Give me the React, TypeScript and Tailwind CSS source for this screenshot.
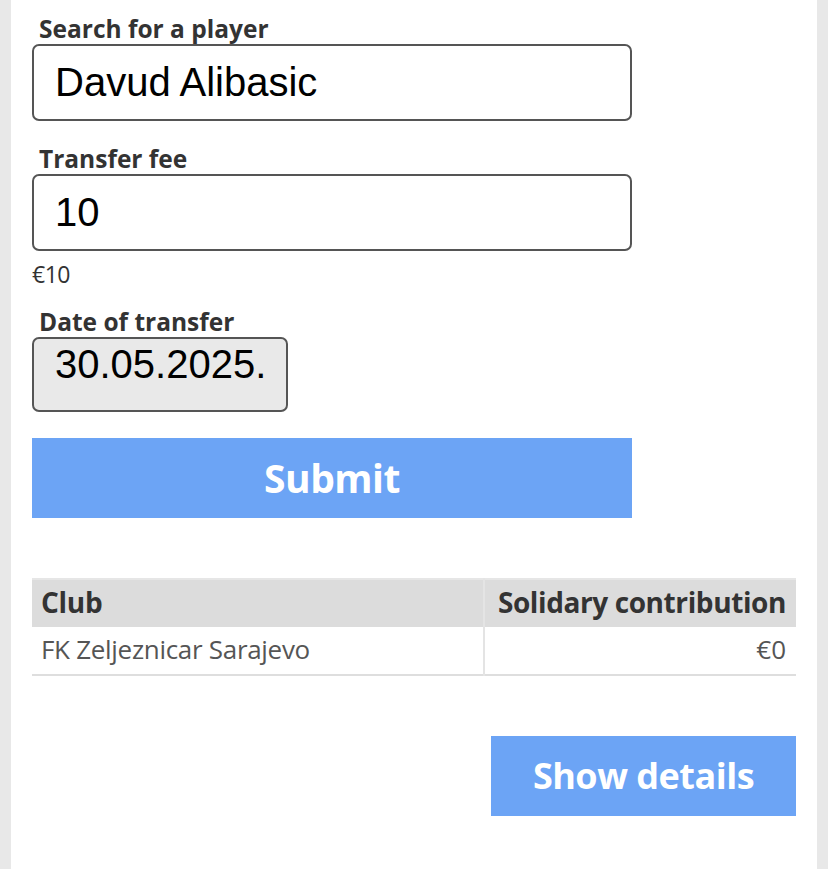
import React, { useState } from 'react'

const labelCls = "block text-[24.5px] leading-[30px] font-bold text-[#333] pl-[7px]"
const inputCls = "w-[600px] h-[77px] border-2 border-[#555] rounded-[7px] px-[21px] text-[40px] text-black bg-white outline-none"

export default function App() {
    const [player, setPlayer] = useState('Davud Alibasic')
    const [fee, setFee] = useState('10')

    return (
        <div className="min-h-[869px] bg-[#e8e8e8] px-[11px] font-['Open_Sans',sans-serif]">
            <div className="bg-white min-h-[869px] pt-[14px] px-[21px]">
                <label className={labelCls}>Search for a player</label>
                <input
                    value={player}
                    onChange={(e) => setPlayer(e.target.value)}
                    className={inputCls}
                    style={{ fontFamily: "'Liberation Sans', Arial, sans-serif" }}
                />

                <label className={`${labelCls} mt-[23px]`}>Transfer fee</label>
                <input
                    value={fee}
                    onChange={(e) => setFee(e.target.value)}
                    className={inputCls}
                    style={{ fontFamily: "'Liberation Sans', Arial, sans-serif" }}
                />
                <div className="text-[23px] leading-[26px] text-[#333] mt-[10px] tracking-[-0.5px]">€{fee}</div>

                <label className={`${labelCls} mt-[20px]`}>Date of transfer</label>
                <div className="w-[256px] h-[75px] border-2 border-[#555] rounded-[7px] bg-[#e9e9e9] px-[21px] pt-[2px] text-[40px] leading-[46px] text-black font-['Liberation_Sans',Arial,sans-serif]">
                    30.05.2025.
                </div>

                <button className="mt-[26px] w-[600px] h-[80px] bg-[#6ca4f5] text-white text-[39px] font-bold tracking-[-0.5px]">
                    Submit
                </button>

                <table className="mt-[60px] w-[764px] border-collapse">
                    <thead>
                        <tr className="bg-[#dcdcdc] border-t-2 border-[#e6e6e6]">
                            <th className="text-left text-[28px] font-bold text-[#333] px-[9px] pb-[4px] h-[48px] tracking-[-0.3px]">Club</th>
                            <th className="text-right text-[28px] font-bold text-[#333] px-[10px] pb-[4px] w-[312px] border-l-2 border-[#e4e4e4] tracking-[-0.4px]">Solidary contribution</th>
                        </tr>
                    </thead>
                    <tbody>
                        <tr className="border-b-2 border-[#dedede]">
                            <td className="text-left text-[26px] text-[#555] px-[9px] pb-[2px] h-[48px] tracking-[-0.3px]">FK Zeljeznicar Sarajevo</td>
                            <td className="text-right text-[26px] text-[#555] px-[10px] pb-[2px] border-l-2 border-[#e4e4e4]">€0</td>
                        </tr>
                    </tbody>
                </table>

                <div className="flex justify-end w-[764px] mt-[60px]">
                    <button className="w-[305px] h-[80px] bg-[#6ca4f5] text-white text-[36px] font-bold tracking-[-0.5px]">
                        Show details
                    </button>
                </div>
            </div>
        </div>
    )
}
